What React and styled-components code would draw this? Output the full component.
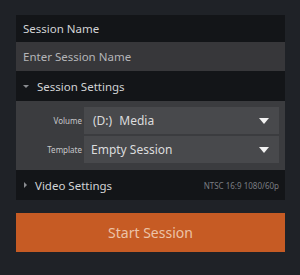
import styled, { createGlobalStyle } from "styled-components";

const Global = createGlobalStyle`
  html, body {
    margin: 0;
    padding: 0;
    background: #1f2227;
    font-family: "Noto Sans", "Open Sans", sans-serif;
  }
`

const Page = styled.div`
  width: 300px;
  height: 275px;
  box-sizing: border-box;
  padding: 15px 15px 0 16px;
  display: flex;
  flex-direction: column;
`
const HeaderRow = styled.div`
  height: ${({ h }) => h || 28}px;
  background: #131518;
  display: flex;
  align-items: center;
  padding: 0 6px 0 ${({ pad }) => pad || 7}px;
  color: #d2d3d5;
  font-size: 11.5px;
`
const Caret = styled.span`
  width: 0;
  height: 0;
  margin-right: 8px;
  ${({ open }) => open
    ? `border-left: 3px solid transparent; border-right: 3px solid transparent; border-top: 3px solid #8a8c90;`
    : `border-top: 3px solid transparent; border-bottom: 3px solid transparent; border-left: 3px solid #8a8c90;`}
`
const Spec = styled.span`
  margin-left: auto;
  font-size: 8px;
  color: #7a7d82;
`
const NameInput = styled.div`
  height: 29px;
  background: #37373a;
  display: flex;
  align-items: center;
  padding-left: 7px;
  color: #b4b5b8;
  font-size: 11.5px;
`
const SettingsBody = styled.div`
  background: #3b3c3f;
  padding: 6px 6px 7px 0;
  display: grid;
  grid-template-columns: 66px 1fr;
  column-gap: 2px;
  row-gap: 2px;
  align-items: center;
`
const FieldLabel = styled.span`
  text-align: right;
  font-size: 8px;
  color: #c7c8ca;
`
const Select = styled.div`
  height: 27px;
  background: #48494c;
  display: flex;
  align-items: center;
  padding: 0 10px 0 ${({ pad }) => pad || 8}px;
  color: #dcdcdd;
  font-size: 12px;
  word-spacing: ${({ spread }) => spread ? "4px" : "0"};
`
const Arrow = styled.span`
  margin-left: auto;
  width: 0;
  height: 0;
  border-left: 5px solid transparent;
  border-right: 5px solid transparent;
  border-top: 6px solid #f2f2f2;
`
const StartButton = styled.button`
  margin-top: 13px;
  height: 39px;
  border: none;
  background: #c65b24;
  color: #ecc3a8;
  font-family: inherit;
  font-size: 14px;
  padding: 0;
`

export default function App() {
  return (
    <Page>
      <Global />
      <HeaderRow h={27}>Session Name</HeaderRow>
      <NameInput>Enter Session Name</NameInput>
      <HeaderRow h={30} pad={7}>
        <Caret open />
        Session Settings
      </HeaderRow>
      <SettingsBody>
        <FieldLabel>Volume</FieldLabel>
        <Select pad={9} spread>(D:) Media<Arrow /></Select>
        <FieldLabel>Template</FieldLabel>
        <Select pad={7}>Empty Session<Arrow /></Select>
      </SettingsBody>
      <HeaderRow h={30} pad={8}>
        <Caret />
        Video Settings
        <Spec>NTSC 16:9 1080/60p</Spec>
      </HeaderRow>
      <StartButton>Start Session</StartButton>
    </Page>
  );
}
